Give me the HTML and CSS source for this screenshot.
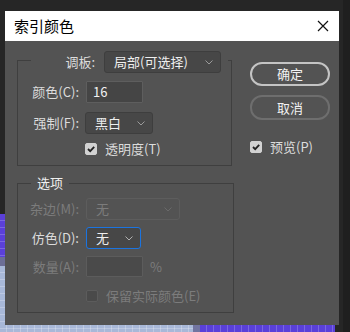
FILE: index.html
```html
<!DOCTYPE html>
<html lang="zh-CN">
<head>
    <meta charset="UTF-8">
    <meta name="viewport" content="width=device-width, initial-scale=1.0">
    <title>索引颜色</title>
    <link rel="stylesheet" href="styles.css">
</head>
<body>

    <!-- Canvas behind the dialog -->
    <div class="backdrop">
        <div class="bg-purple-left"></div>
        <div class="bg-seam-left"></div>
        <div class="bg-light"></div>
        <div class="bg-seam-bottom"></div>
        <div class="bg-purple-bottom"></div>
        <div class="bg-right-edge"></div>
    </div>

    <div class="dialog">
        <!-- Title bar -->
        <div class="titlebar">
            <span class="title">索引颜色</span>
            <span class="close">
                <svg width="12" height="12" viewBox="0 0 12 12">
                    <path d="M1 1 L11 11 M11 1 L1 11" stroke="#111" stroke-width="1.2" fill="none"/>
                </svg>
            </span>
        </div>

        <div class="dialog-body">
            <div class="left-col">
                <!-- Palette group -->
                <div class="group group-palette">
                    <div class="group-head">
                        <span class="head-label">调板:</span>
                        <div class="select select-palette">
                            <span>局部(可选择)</span>
                            <svg class="chev" width="8" height="5" viewBox="0 0 8 5"><path d="M0.5 0.5 L4 4 L7.5 0.5" stroke="#9a9a9a" fill="none"/></svg>
                        </div>
                    </div>

                    <div class="row row-first">
                        <span class="row-label">颜色(C):</span>
                        <div class="field field-colors">16</div>
                    </div>

                    <div class="row">
                        <span class="row-label">强制(F):</span>
                        <div class="select select-forced">
                            <span>黑白</span>
                            <svg class="chev" width="8" height="5" viewBox="0 0 8 5"><path d="M0.5 0.5 L4 4 L7.5 0.5" stroke="#9a9a9a" fill="none"/></svg>
                        </div>
                    </div>

                    <div class="check-row">
                        <span class="checkbox checked">
                            <svg width="10" height="10" viewBox="0 0 10 10"><path d="M2 5 L4.2 7.2 L8.2 2.8" stroke="#222" stroke-width="1.8" fill="none"/></svg>
                        </span>
                        <span class="check-text">透明度(T)</span>
                    </div>
                </div>

                <!-- Options group -->
                <div class="group group-options">
                    <div class="legend">选项</div>

                    <div class="row row-first disabled">
                        <span class="row-label">杂边(M):</span>
                        <div class="select select-matte">
                            <span>无</span>
                            <svg class="chev" width="8" height="5" viewBox="0 0 8 5"><path d="M0.5 0.5 L4 4 L7.5 0.5" stroke="#6a6a6a" fill="none"/></svg>
                        </div>
                    </div>

                    <div class="row">
                        <span class="row-label">仿色(D):</span>
                        <div class="select select-dither">
                            <span>无</span>
                            <svg class="chev" width="8" height="5" viewBox="0 0 8 5"><path d="M0.5 0.5 L4 4 L7.5 0.5" stroke="#b0b0b0" fill="none"/></svg>
                        </div>
                    </div>

                    <div class="row row-amount disabled">
                        <span class="row-label">数量(A):</span>
                        <div class="field field-amount"></div>
                        <span class="unit">%</span>
                    </div>

                    <div class="check-row check-row-last disabled">
                        <span class="checkbox"></span>
                        <span class="check-text">保留实际颜色(E)</span>
                    </div>
                </div>
            </div>

            <!-- Buttons -->
            <div class="right-col">
                <button class="btn btn-primary">确定</button>
                <button class="btn btn-secondary">取消</button>
                <div class="preview">
                    <span class="checkbox checked">
                        <svg width="10" height="10" viewBox="0 0 10 10"><path d="M2 5 L4.2 7.2 L8.2 2.8" stroke="#222" stroke-width="1.8" fill="none"/></svg>
                    </span>
                    <span class="check-text">预览(P)</span>
                </div>
            </div>
        </div>
    </div>

</body>
</html>
```

FILE: styles.css
```css
/* Basic Reset */
* {
    box-sizing: border-box;
    margin: 0;
    padding: 0;
}

body {
    font-family: "Noto Sans CJK SC", "Liberation Sans", sans-serif;
    font-size: 13px;
    background: #262626;
    width: 350px;
    height: 332px;
    overflow: hidden;
    position: relative;
    padding: 11px 0 0 5px;
}

/* Backdrop pieces */
.backdrop div {
    position: absolute;
}

.bg-purple-left {
    left: 0;
    top: 214px;
    width: 5px;
    height: 43px;
    background: repeating-linear-gradient(180deg, #5b40d9 0, #5b40d9 6px, #7a66e2 6px, #7a66e2 7px);
}

.bg-seam-left {
    left: 0;
    top: 257px;
    width: 5px;
    height: 9px;
    background: #6c6e96;
}

.bg-light {
    left: 0;
    top: 266px;
    width: 193px;
    height: 66px;
    background:
        repeating-linear-gradient(90deg, transparent 0, transparent 6px, rgba(255, 255, 255, 0.25) 6px, rgba(255, 255, 255, 0.25) 7px),
        repeating-linear-gradient(180deg, #a8b8d8 0, #a8b8d8 6px, #bcc8e2 6px, #bcc8e2 7px);
}

.bg-seam-bottom {
    left: 193px;
    top: 325px;
    width: 7px;
    height: 7px;
    background: #7174a0;
}

.bg-purple-bottom {
    left: 200px;
    top: 325px;
    width: 135px;
    height: 7px;
    background: repeating-linear-gradient(90deg, #5a40da 0, #5a40da 6px, #7a68e2 6px, #7a68e2 7px);
}

.bg-right-edge {
    left: 343px;
    top: 0;
    width: 7px;
    height: 332px;
    background: #1f1f1f;
}

/* Dialog */
.dialog {
    position: relative;
    width: 334px;
    height: 314px;
    background: #535353;
    color: #dcdcdc;
}

.titlebar {
    height: 30px;
    background: #fff;
    display: flex;
    align-items: center;
    justify-content: space-between;
    padding: 0 10px 0 9px;
}

.title {
    font-size: 15px;
    color: #000;
    line-height: 20px;
}

.close {
    display: flex;
}

.dialog-body {
    display: flex;
    padding: 19px 0 0 12px;
}

.left-col {
    display: flex;
    flex-direction: column;
}

/* Groups */
.group {
    border: 1px solid #3f3f3f;
}

.group-palette {
    width: 215px;
    padding-bottom: 6px;
}

.group-options {
    width: 217px;
    margin-top: 17px;
    padding-bottom: 6px;
}

.group-head {
    display: flex;
    align-items: center;
    width: fit-content;
    margin: -10px 0 0 13px;
    padding-right: 7px;
    background: #535353;
}

.head-label {
    width: 64px;
    text-align: right;
    margin-right: 9px;
    line-height: 18px;
}

.legend {
    width: fit-content;
    margin: -10px 0 0 13px;
    padding: 0 6px;
    line-height: 18px;
    background: #535353;
    color: #f0f0f0;
}

.row {
    display: flex;
    align-items: center;
    height: 22px;
    margin-top: 9px;
}

.row-first {
    margin-top: 8px;
}

.group-options .row-first {
    margin-top: 6px;
}

.group-options .row + .row {
    margin-top: 7px;
}

.group-options .row-amount {
    margin-top: 6px;
    height: 21px;
}

.row-label {
    width: 61px;
    text-align: right;
    margin-right: 7px;
    line-height: 18px;
}

.disabled {
    color: #7c7c7c;
}

/* Inputs */
.select,
.field {
    height: 22px;
    border-radius: 3px;
    display: flex;
    align-items: center;
    justify-content: space-between;
    padding: 0 7px 0 9px;
    line-height: 18px;
}

.select {
    background: #474747;
    border: 1px solid #3e3e3e;
    color: #eee;
}

.field {
    background: #454545;
    border: 1px solid #5e5e5e;
    color: #f2f2f2;
    padding-left: 6px;
    border-radius: 1px;
}

.select-palette {
    width: 117px;
}

.field-colors {
    width: 57px;
}

.select-forced {
    width: 68px;
    margin-left: -1px;
}

.select-matte {
    width: 94px;
    background: #535353;
    border-color: #5d5d5d;
    color: #7c7c7c;
}

.select-dither {
    width: 55px;
    border-color: #1b74e0;
}

.field-amount {
    width: 57px;
    height: 21px;
    background: #4a4a4a;
    border-color: #5c5c5c;
}

.unit {
    margin-left: 7px;
    line-height: 18px;
}

/* Checkboxes */
.check-row {
    display: flex;
    align-items: center;
    height: 20px;
    margin-top: 5px;
    padding-left: 67px;
}

.check-row-last {
    margin-top: 9px;
    padding-left: 68px;
}

.checkbox {
    width: 12px;
    height: 12px;
    border-radius: 2px;
    background: #4a4a4a;
    border: 1px solid #5c5c5c;
    display: flex;
    align-items: center;
    justify-content: center;
}

.checkbox.checked {
    background: #d2d2d2;
    border-color: #d2d2d2;
}

.check-text {
    margin-left: 8px;
    line-height: 18px;
}

/* Right column */
.right-col {
    display: flex;
    flex-direction: column;
    margin-left: 16px;
    padding-top: 2px;
}

.btn {
    width: 80px;
    height: 24px;
    border-radius: 12px;
    background: #535353;
    color: #f2f2f2;
    font-family: inherit;
    font-size: 13px;
    line-height: 18px;
}

.btn-primary {
    border: 2px solid #c4c4c4;
}

.btn-secondary {
    margin-top: 9px;
    height: 25px;
    border: 2px solid #6e6e6e;
}

.preview {
    display: flex;
    align-items: center;
    height: 20px;
    margin-top: 17px;
}
```
